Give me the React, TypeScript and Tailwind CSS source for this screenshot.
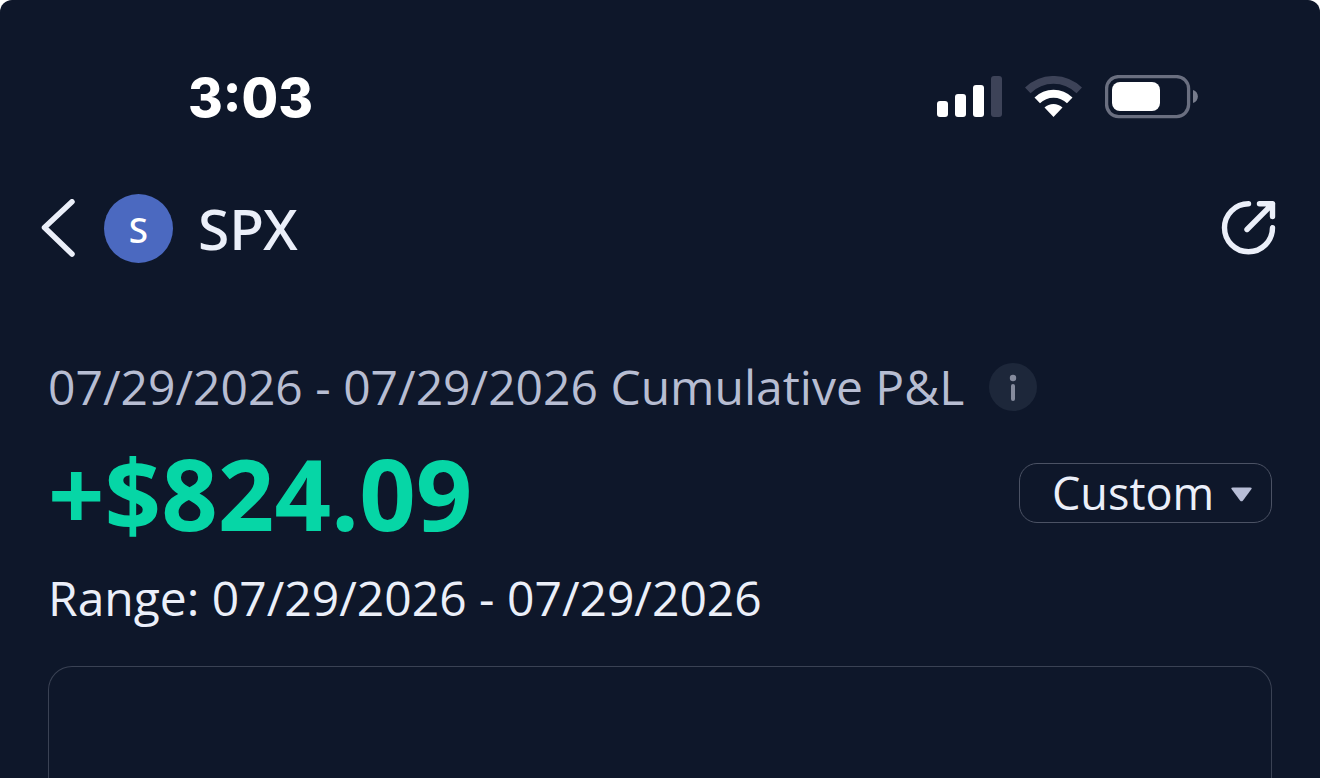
import React, { useState } from "react";

const DAY = "07/29/2026";

function SignalIcon() {
  return (
    <svg width="66" height="42" viewBox="0 0 66 42" aria-hidden>
      <rect x="0" y="25" width="11" height="16" rx="3" fill="#fff" />
      <rect x="18" y="18" width="11" height="23" rx="3" fill="#fff" />
      <rect x="36" y="9" width="11" height="32" rx="3" fill="#fff" />
      <rect x="54" y="0" width="11" height="41" rx="3" fill="#3d4358" />
    </svg>
  );
}

function WifiIcon() {
  return (
    <svg width="58" height="42" viewBox="0 0 58 42" aria-hidden>
      <path d="M0 11.5A41 41 0 0 1 57 11.5L51.500 17.2A33 33 0 0 0 5.500 17.2Z" fill="#3d4358" />
      <path d="M9.500 21.5A27 27 0 0 1 47.500 21.5L42 27.3A19 19 0 0 0 15 27.3Z" fill="#fff" />
      <path d="M19.500 31.500A13 13 0 0 1 37.500 31.500L28.500 41Z" fill="#fff" />
    </svg>
  );
}

function BatteryIcon() {
  return (
    <svg width="93" height="44" viewBox="0 0 93 44" aria-hidden>
      <rect x="1.6" y="1.6" width="82" height="40" rx="12" fill="none" stroke="#6a6f80" strokeWidth="3.3" />
      <rect x="7" y="7" width="48" height="29" rx="8" fill="#fff" />
      <path d="M88 15C94.5 17 94.5 26 88 28Z" fill="#777c8c" />
    </svg>
  );
}

function StatusBar() {
  return (
    <div className="flex items-start justify-between pt-16 pl-[188px] pr-[122px]">
      <div className="font-['Inter',sans-serif] text-[53px] leading-[68px] font-extrabold text-white">3:03</div>
      <div className="mt-[11px] flex items-center gap-[22px]">
        <SignalIcon />
        <WifiIcon />
        <BatteryIcon />
      </div>
    </div>
  );
}

function NavBar() {
  return (
    <header className="mt-[62px] flex items-center justify-between pl-10 pr-[43px]">
      <div className="flex items-center font-['Noto_Sans',sans-serif] font-medium">
        <button type="button" aria-label="Back" className="mr-7">
          <svg width="36" height="60" viewBox="0 0 36 60" aria-hidden>
            <path
              d="M32 2.8L4.5 28.5L32 55"
              fill="none"
              stroke="#ebeff9"
              strokeWidth="5.5"
              strokeLinecap="round"
              strokeLinejoin="round"
            />
          </svg>
        </button>
        <div className="mr-[25px] flex size-[69px] items-center justify-center rounded-full bg-[#4b69c0] pt-0.5 text-[35px] leading-none text-white">
          S
        </div>
        <h1 className="text-[57px] leading-[69px] text-[#ebeff9]">SPX</h1>
      </div>
      <button type="button" aria-label="Share">
        <svg width="56" height="56" viewBox="0 0 56 56" aria-hidden>
          <g fill="none" stroke="#ebeff9" strokeWidth="5.4" strokeLinecap="round" strokeLinejoin="round">
            <path d="M27.5 2.8A24 24 0 1 0 51.5 26.8" />
            <path d="M38.5 2.8H51.5V15.5M51.5 2.8L26 28.5" />
          </g>
        </svg>
      </button>
    </header>
  );
}

export default function App() {
  const [period, setPeriod] = useState("Custom");

  return (
    <div className="bg-white">
      <div className="flex min-h-screen flex-col overflow-hidden rounded-t-xl bg-[#0e172a] font-['Open_Sans',sans-serif]">
        <StatusBar />
        <NavBar />

        <main className="mt-[90px] flex flex-1 flex-col px-12">
          <div className="flex items-center gap-[25px]">
            <p className="text-[48px] leading-[68px] text-[#b7bdd2]">
              {DAY} - {DAY} Cumulative P&amp;L
            </p>
            <button type="button" aria-label="About cumulative P&L">
              <svg width="48" height="48" viewBox="0 0 48 48" aria-hidden>
                <circle cx="24" cy="24" r="24" fill="#1d273a" />
                <circle cx="24" cy="15" r="3.2" fill="#858b9d" />
                <path d="M24 23V36" stroke="#858b9d" strokeWidth="4" strokeLinecap="round" />
              </svg>
            </button>
          </div>

          <div className="mt-[6px] flex items-center justify-between">
            <div className="text-[99px] leading-[131px] font-bold text-[#06d6a6]">+$824.09</div>
            <div className="relative">
              <select
                aria-label="Period"
                value={period}
                onChange={(e) => setPeriod(e.target.value)}
                className="block h-[60px] w-[253px] appearance-none rounded-[18px] border border-[#4b5264] bg-transparent pl-8 text-[45px] leading-[58px] text-[#ebeff9]"
              >
                <option>Custom</option>
                <option>Week</option>
                <option>Month</option>
              </select>
              <svg
                className="pointer-events-none absolute top-6 right-5"
                width="21"
                height="15"
                viewBox="0 0 21 15"
                aria-hidden
              >
                <path
                  d="M1.8 0.5H19.2Q21.5 0.5 20.3 2.3L12 13.5Q10.5 15.2 9 13.5L0.7 2.3Q-0.5 0.5 1.8 0.5Z"
                  fill="#b7bdd6"
                />
              </svg>
            </div>
          </div>

          <p className="mt-[6px] text-[48px] leading-[68px] text-[#ebeff9]">
            Range: {DAY} - {DAY}
          </p>

          {/* chart panel, runs off the bottom of the screen */}
          <section className="mt-[34px] min-h-28 flex-1 rounded-t-[24px] border border-b-0 border-[#3a4254]" />
        </main>
      </div>
    </div>
  );
}
